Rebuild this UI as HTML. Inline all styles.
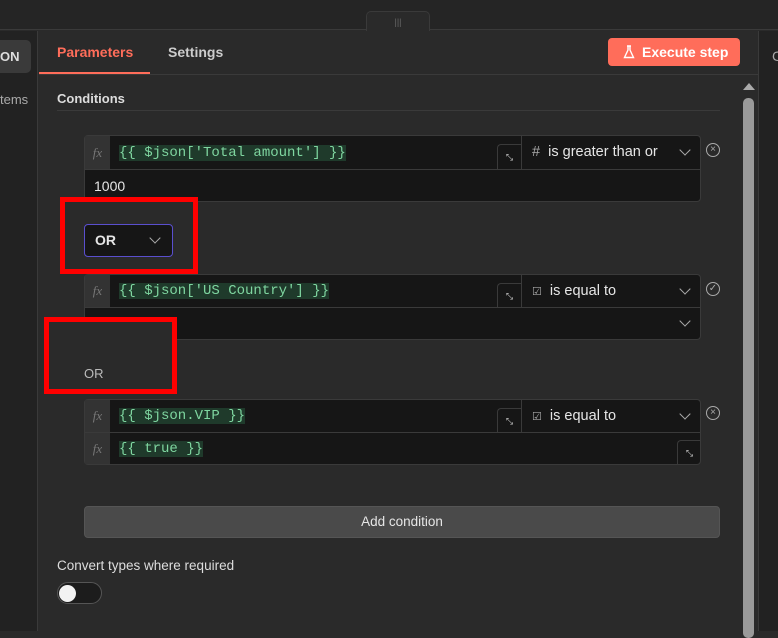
<!DOCTYPE html>
<html><head><meta charset="utf-8"><style>
*{box-sizing:border-box;margin:0;padding:0}
body{width:778px;height:631px;background:#2a2a2a;position:relative;overflow:hidden;font-family:"Liberation Sans",sans-serif;color:#ddd;font-size:14px}
.a{position:absolute}
.mono{font-family:"Liberation Mono",monospace;color:#7fd6a0;background:#1f3a2b;font-size:14px}
.box{position:absolute;left:84px;width:617px;background:#161616;border:1px solid #3a3a3a;border-radius:4px}
.fx{position:absolute;left:0;width:25px;background:#333;color:#777;font-family:"Liberation Serif",serif;font-style:italic;font-size:13px;text-align:center}
.op{position:absolute;left:436px;width:180px;border-left:1px solid #3a3a3a;color:#e6e6e6;font-size:14.5px}
.exp{position:absolute;width:24px;height:25px;border:1px solid #3a3a3a;border-bottom:none;border-right:none;border-radius:4px 0 0 0;font-size:9px;color:#ccc;text-align:center;line-height:25px}
.chev{position:absolute;width:8px;height:8px;border-right:1.5px solid #aaa;border-bottom:1.5px solid #aaa;transform:rotate(45deg)}
.red{position:absolute;border:5px solid #ff0000;background:#2a2a2a}
.circ{position:absolute;width:14px;height:14px;border:1.5px solid #aaa;border-radius:50%;font-size:10px;color:#aaa;text-align:center;line-height:11px}
</style></head><body>
<div class="a" style="left:0;top:0;width:778px;height:30px;background:#252525;border-bottom:1px solid #3a3a3a"></div>
<div class="a" style="left:366px;top:11px;width:64px;height:20px;background:#2a2a2a;border:1px solid #3a3a3a;border-bottom:none;border-radius:5px 5px 0 0;color:#666;font-size:9px;text-align:center;line-height:20px">|||</div>
<div class="a" style="left:0;top:31px;width:38px;height:600px;background:#222;border-right:1px solid #3a3a3a"></div>
<div class="a" style="left:0;top:40px;width:31px;height:33px;background:#3a3a3a;border-radius:0 5px 5px 0;color:#ddd;font-weight:bold;font-size:13px;line-height:33px">ON</div>
<div class="a" style="left:0;top:92px;color:#aaa;font-size:13px">tems</div>
<div class="a" style="left:758px;top:31px;width:20px;height:600px;background:#222;border-left:1px solid #3a3a3a"></div>
<div class="a" style="left:772px;top:48px;color:#aaa;font-size:14px">C</div>
<div class="a" style="left:39px;top:74px;width:719px;height:1px;background:#3a3a3a"></div>
<div class="a" style="left:57px;top:44px;color:#ff6d5a;font-weight:bold;font-size:14px">Parameters</div>
<div class="a" style="left:39px;top:72px;width:111px;height:2px;background:#ff6d5a"></div>
<div class="a" style="left:168px;top:44px;color:#ccc;font-weight:bold;font-size:14px">Settings</div>
<div class="a" style="left:608px;top:38px;width:132px;height:28px;background:#ff6d5a;border-radius:4px;color:#fff;font-weight:bold;font-size:14px;line-height:28px;padding-left:34px">Execute step</div>
<svg class="a" style="left:623px;top:45px" width="12" height="14" viewBox="0 0 12 14"><path d="M4 1h4M5 1v4L1.5 12.5h9L7 5V1" fill="none" stroke="#fff" stroke-width="1.4"/></svg>
<div class="a" style="left:57px;top:91px;color:#ddd;font-weight:bold;font-size:13px">Conditions</div>
<div class="a" style="left:57px;top:110px;width:663px;height:1px;background:#3a3a3a"></div>
<div class="a" style="left:743px;top:83px;width:0;height:0;border-left:6px solid transparent;border-right:6px solid transparent;border-bottom:7px solid #aaa"></div>
<div class="a" style="left:743px;top:98px;width:11px;height:540px;background:#9a9a9a;border-radius:5px"></div>

<div class="box" style="top:135px;height:67px">
 <div class="fx" style="top:0;height:33px;line-height:33px">fx</div>
 <div class="a" style="left:34px;top:7px"><span class="mono">{{ $json['Total amount'] }}</span></div>
 <div class="exp" style="left:412px;top:8px">⤡</div>
 <div class="op" style="top:0;height:33px;line-height:33px;padding-left:10px"><span style="color:#aaa">#</span>&nbsp; is greater than or</div>
 <div class="chev" style="left:596px;top:10px"></div>
 <div class="a" style="left:0;top:33px;width:615px;height:1px;background:#3a3a3a"></div>
 <div class="a" style="left:9px;top:42px;color:#e6e6e6">1000</div>
</div>
<div class="circ" style="left:706px;top:143px">×</div>

<div class="red" style="left:60px;top:197px;width:138px;height:77px"></div>
<div class="a" style="left:84px;top:224px;width:89px;height:33px;background:#161616;border:1px solid #5a4fcf;border-radius:4px;color:#e6e6e6;font-weight:bold;font-size:14px;line-height:31px;padding-left:10px">OR</div>
<div class="chev" style="left:151px;top:234px"></div>

<div class="box" style="top:274px;height:66px">
 <div class="fx" style="top:0;height:32px;line-height:32px">fx</div>
 <div class="a" style="left:34px;top:6px"><span class="mono">{{ $json['US Country'] }}</span></div>
 <div class="exp" style="left:412px;top:8px">⤡</div>
 <div class="op" style="top:0;height:32px;line-height:32px;padding-left:10px"><span style="color:#aaa;font-size:11px">☑</span>&nbsp; is equal to</div>
 <div class="chev" style="left:596px;top:10px"></div>
 <div class="a" style="left:0;top:32px;width:615px;height:1px;background:#3a3a3a"></div>
 <div class="a" style="left:9px;top:42px;color:#e6e6e6">true</div>
 <div class="chev" style="left:596px;top:42px"></div>
</div>
<div class="circ" style="left:706px;top:282px">✓</div>
<div class="red" style="left:44px;top:317px;width:133px;height:77px"></div>
<div class="a" style="left:84px;top:366px;color:#bbb;font-size:13px">OR</div>

<div class="box" style="top:399px;height:66px">
 <div class="fx" style="top:0;height:32px;line-height:32px">fx</div>
 <div class="a" style="left:34px;top:6px"><span class="mono">{{ $json.VIP }}</span></div>
 <div class="exp" style="left:412px;top:8px">⤡</div>
 <div class="op" style="top:0;height:32px;line-height:32px;padding-left:10px"><span style="color:#aaa;font-size:11px">☑</span>&nbsp; is equal to</div>
 <div class="chev" style="left:596px;top:10px"></div>
 <div class="a" style="left:0;top:32px;width:615px;height:1px;background:#3a3a3a"></div>
 <div class="fx" style="top:33px;height:31px;line-height:31px">fx</div>
 <div class="a" style="left:34px;top:39px"><span class="mono">{{ true }}</span></div>
 <div class="exp" style="left:592px;top:40px">⤡</div>
</div>
<div class="circ" style="left:706px;top:406px">×</div>

<div class="a" style="left:84px;top:506px;width:636px;height:32px;background:#4a4a4a;border:1px solid #555;border-radius:4px;color:#e6e6e6;font-size:13.5px;text-align:center;line-height:30px">Add condition</div>
<div class="a" style="left:57px;top:558px;color:#ddd;font-size:13.5px">Convert types where required</div>
<div class="a" style="left:57px;top:582px;width:45px;height:22px;background:#1c1c1c;border:1px solid #555;border-radius:11px"></div>
<div class="a" style="left:59px;top:585px;width:17px;height:17px;background:#f2f2f2;border-radius:50%"></div>
</body></html>
